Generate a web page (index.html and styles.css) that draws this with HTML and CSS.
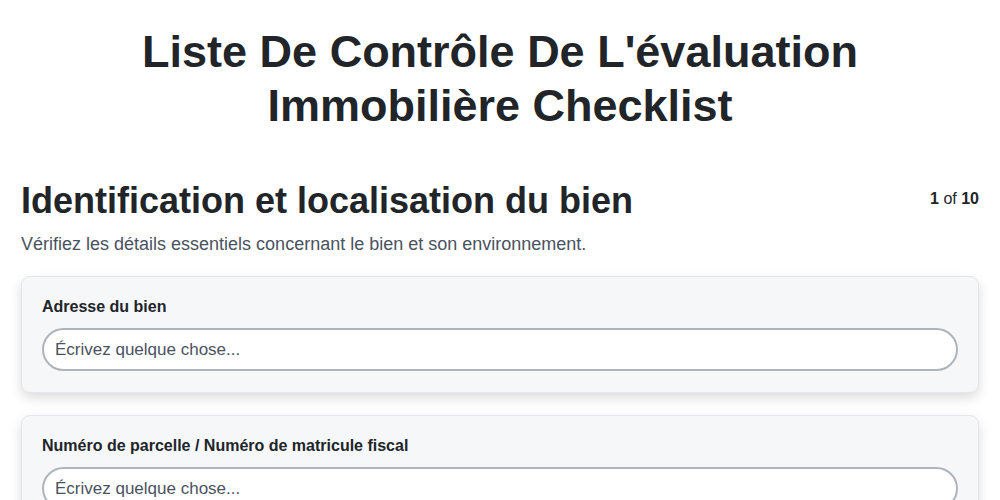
FILE: index.html
```html
<!DOCTYPE html>
<html lang="fr">
<head>
    <meta charset="UTF-8">
    <meta name="viewport" content="width=device-width, initial-scale=1.0">
    <title>Liste De Contrôle De L'évaluation Immobilière Checklist</title>
    <link rel="stylesheet" href="styles.css">
</head>
<body>
    <div class="page">
        <h1 class="page-title">Liste De Contrôle De L'évaluation Immobilière Checklist</h1>

        <div class="section-head">
            <h2>Identification et localisation du bien</h2>
            <div class="step"><strong>1</strong> of <strong>10</strong></div>
        </div>
        <p class="section-desc">Vérifiez les détails essentiels concernant le bien et son environnement.</p>

        <div class="card">
            <label class="field-label" for="adresse">Adresse du bien</label>
            <input class="field-input" id="adresse" type="text" placeholder="Écrivez quelque chose...">
        </div>

        <div class="card">
            <label class="field-label" for="parcelle">Numéro de parcelle / Numéro de matricule fiscal</label>
            <input class="field-input" id="parcelle" type="text" placeholder="Écrivez quelque chose...">
        </div>
    </div>
</body>
</html>
```

FILE: styles.css
```css
body {
    font-family: "Liberation Sans", Arial, sans-serif;
    background-color: #ffffff;
    color: #212529;
    margin: 0;
}
.page {
    padding: 0 21px;
}
.page-title {
    font-size: 45px;
    line-height: 54px;
    text-align: center;
    margin: 25px 0 46px;
    padding: 0 100px;
}
.section-head {
    display: flex;
    justify-content: space-between;
    align-items: flex-start;
}
.section-head h2 {
    font-size: 36px;
    line-height: 44px;
    margin: 0;
}
.step {
    font-size: 16px;
    margin-top: 11px;
}
.section-desc {
    font-size: 18px;
    line-height: 21px;
    color: #4a5260;
    margin: 11px 0 21px;
}
.card {
    background-color: #f6f7f9;
    border: 1px solid #e3e6ea;
    border-radius: 9px;
    box-shadow: 0 5px 12px rgba(0,0,0,0.14);
    padding: 21px 20px 21px;
    margin-bottom: 22px;
}
.field-label {
    display: block;
    font-size: 16px;
    line-height: 18px;
    font-weight: bold;
    margin-bottom: 12px;
}
.field-input {
    display: block;
    box-sizing: border-box;
    width: 100%;
    height: 43px;
    border: 2px solid #aeb4bb;
    border-radius: 22px;
    background-color: #ffffff;
    padding: 0 11px;
    font-family: "Liberation Sans", Arial, sans-serif;
    font-size: 17px;
    color: #212529;
}
.field-input::placeholder {
    color: #4a5260;
}
```
